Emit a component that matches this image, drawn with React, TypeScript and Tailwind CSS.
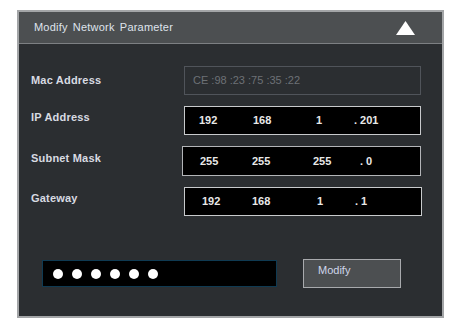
import { useState } from 'react';

const fieldBox = 'h-[29px] w-[237px] bg-black border flex items-center text-[11px] font-bold text-[#e8e8e8]';

function IpField({ parts, widths, className }: { parts: string[]; widths: string[]; className: string }) {
  return (
    <div className={`${fieldBox} ${className}`}>
      <span className={widths[0]}>{parts[0]}</span>
      <span className={widths[1]}>{parts[1]}</span>
      <span className={widths[2]}>{parts[2]}</span>
      <span>{parts[3]}</span>
    </div>
  );
}

export default function App() {
  const [open] = useState(true);

  return (
    <div className="w-[450px] h-[328px] bg-white pt-[10px] pl-[17px] font-['Liberation_Sans',Arial,sans-serif]">
      <div className="w-[427px] h-[308px] border-2 border-[#a3a5a7] bg-[#2b2e31] flex flex-col">
        <div className="h-[32px] bg-[#4c4f51] border-b border-[#7d8083] flex items-center justify-between pl-[15px] pr-[27px]">
          <span className="text-[11px] text-[#dfe3ec] tracking-[0.2px] [word-spacing:2px]">Modify Network Parameter</span>
          {open && (
            <svg width="19" height="14" viewBox="0 0 19 14">
              <polygon points="9.5,0 19,14 0,14" fill="#ffffff" />
            </svg>
          )}
        </div>

        <div className="flex flex-col pl-[12px] pt-[22px]">
          <div className="flex items-center h-[29px]">
            <span className="w-[153px] text-[11px] font-bold text-[#d8dbe2] tracking-[0.2px]">Mac Address</span>
            <div className="h-[29px] w-[237px] border border-[#50545a] flex items-center pl-[8px] text-[11px] text-[#6d7176]">
              CE :98 :23 :75 :35 :22
            </div>
          </div>

          <div className="flex items-center h-[29px] mt-[11px]">
            <span className="w-[153px] text-[11px] font-bold text-[#d8dbe2] tracking-[0.2px] -mt-[6px]">IP Address</span>
            <IpField
              parts={['192', '168', '1', '. 201']}
              widths={['w-[68px] pl-[14px]', 'w-[63px]', 'w-[38px]']}
              className="border-[#c8cacc]"
            />
          </div>

          <div className="flex items-center h-[30px] mt-[11px]">
            <span className="w-[151px] text-[11px] font-bold text-[#d8dbe2] tracking-[0.2px] -mt-[6px]">Subnet Mask</span>
            <IpField
              parts={['255', '255', '255', '. 0']}
              widths={['w-[69px] pl-[17px]', 'w-[61px]', 'w-[47px]']}
              className="h-[30px] w-[239px] border-[#b3b5b8]"
            />
          </div>

          <div className="flex items-center h-[29px] mt-[11px]">
            <span className="w-[153px] text-[11px] font-bold text-[#d8dbe2] tracking-[0.2px] -mt-[6px]">Gateway</span>
            <IpField
              parts={['192', '168', '1', '. 1']}
              widths={['w-[67px] pl-[17px]', 'w-[65px]', 'w-[38px]']}
              className="w-[238px] border-[#c8cacc]"
            />
          </div>

          <div className="flex items-center mt-[43px] pl-[11px]">
            <div className="h-[27px] w-[235px] bg-black border border-[#0f3a52] flex items-center gap-[9px] pl-[10px]">
              {[0, 1, 2, 3, 4, 5].map((i) => (
                <span key={i} className="w-[10px] h-[10px] rounded-full bg-white" />
              ))}
            </div>
            <button className="ml-[26px] h-[29px] w-[98px] bg-[#4c4f51] border border-[#a8aaad] text-left pl-[14px] pb-[6px] text-[11px] text-[#cfd6ea]">
              Modify
            </button>
          </div>
        </div>
      </div>
    </div>
  );
}
